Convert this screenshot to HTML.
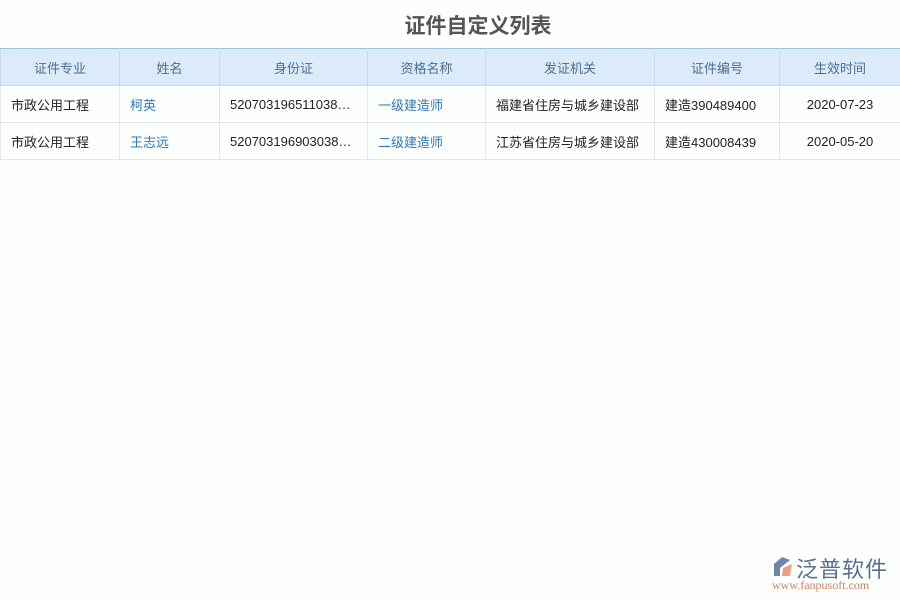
<!DOCTYPE html><html><head><meta charset="utf-8"><style>
body{margin:0;width:900px;height:600px;background:#fdfefe;font-family:"Liberation Sans","Noto Sans CJK SC",sans-serif;position:relative;overflow:hidden}
h1{position:absolute;top:10px;left:0;width:956px;margin:0;text-align:center;font-size:21px;color:#555;font-weight:bold}
table{position:absolute;top:48px;left:0;border-collapse:collapse;table-layout:fixed;width:900px;font-size:13px}
th{height:36px;padding:0;background:#dcebf9;color:#4a6f8f;font-weight:normal;border:1px solid #c9dcee;border-top:1px solid #9cc1e0}
td{height:36px;border:1px solid #e3e6ea;color:#222;padding:0 0 0 10px;white-space:nowrap;overflow:hidden}
.l{color:#2f79b9}.c{text-align:center;padding:0}
.logo{position:absolute;left:770px;top:553px}
</style></head><body>
<h1>证件自定义列表</h1>
<table><colgroup><col style="width:119px"><col style="width:100px"><col style="width:148px"><col style="width:118px"><col style="width:169px"><col style="width:125px"><col style="width:121px"></colgroup>
<tr><th>证件专业</th><th>姓名</th><th>身份证</th><th>资格名称</th><th>发证机关</th><th>证件编号</th><th>生效时间</th></tr>
<tr><td>市政公用工程</td><td class="l">柯英</td><td>520703196511038…</td><td class="l">一级建造师</td><td>福建省住房与城乡建设部</td><td>建造390489400</td><td class="c">2020-07-23</td></tr>
<tr><td>市政公用工程</td><td class="l">王志远</td><td>520703196903038…</td><td class="l">二级建造师</td><td>江苏省住房与城乡建设部</td><td>建造430008439</td><td class="c">2020-05-20</td></tr>
</table>
<div class="logo">
<svg width="24" height="22" style="position:absolute;left:0;top:3px"><path d="M12 1 L4 8 L4 20 L10 20 L10 12 L20 4Z" fill="#6b86a8"/><path d="M13 12 L22 8 L20 20 L12 20Z" fill="#e9a27d"/></svg>
<div style="position:absolute;left:26px;top:-1px;font-size:22px;color:#5a6f8f;white-space:nowrap;letter-spacing:1px">泛普软件</div>
<div style="position:absolute;left:2px;top:25px;font-size:12px;color:#d0825a;font-family:'Liberation Serif',serif;white-space:nowrap">www.fanpusoft.com</div>
</div>
</body></html>
